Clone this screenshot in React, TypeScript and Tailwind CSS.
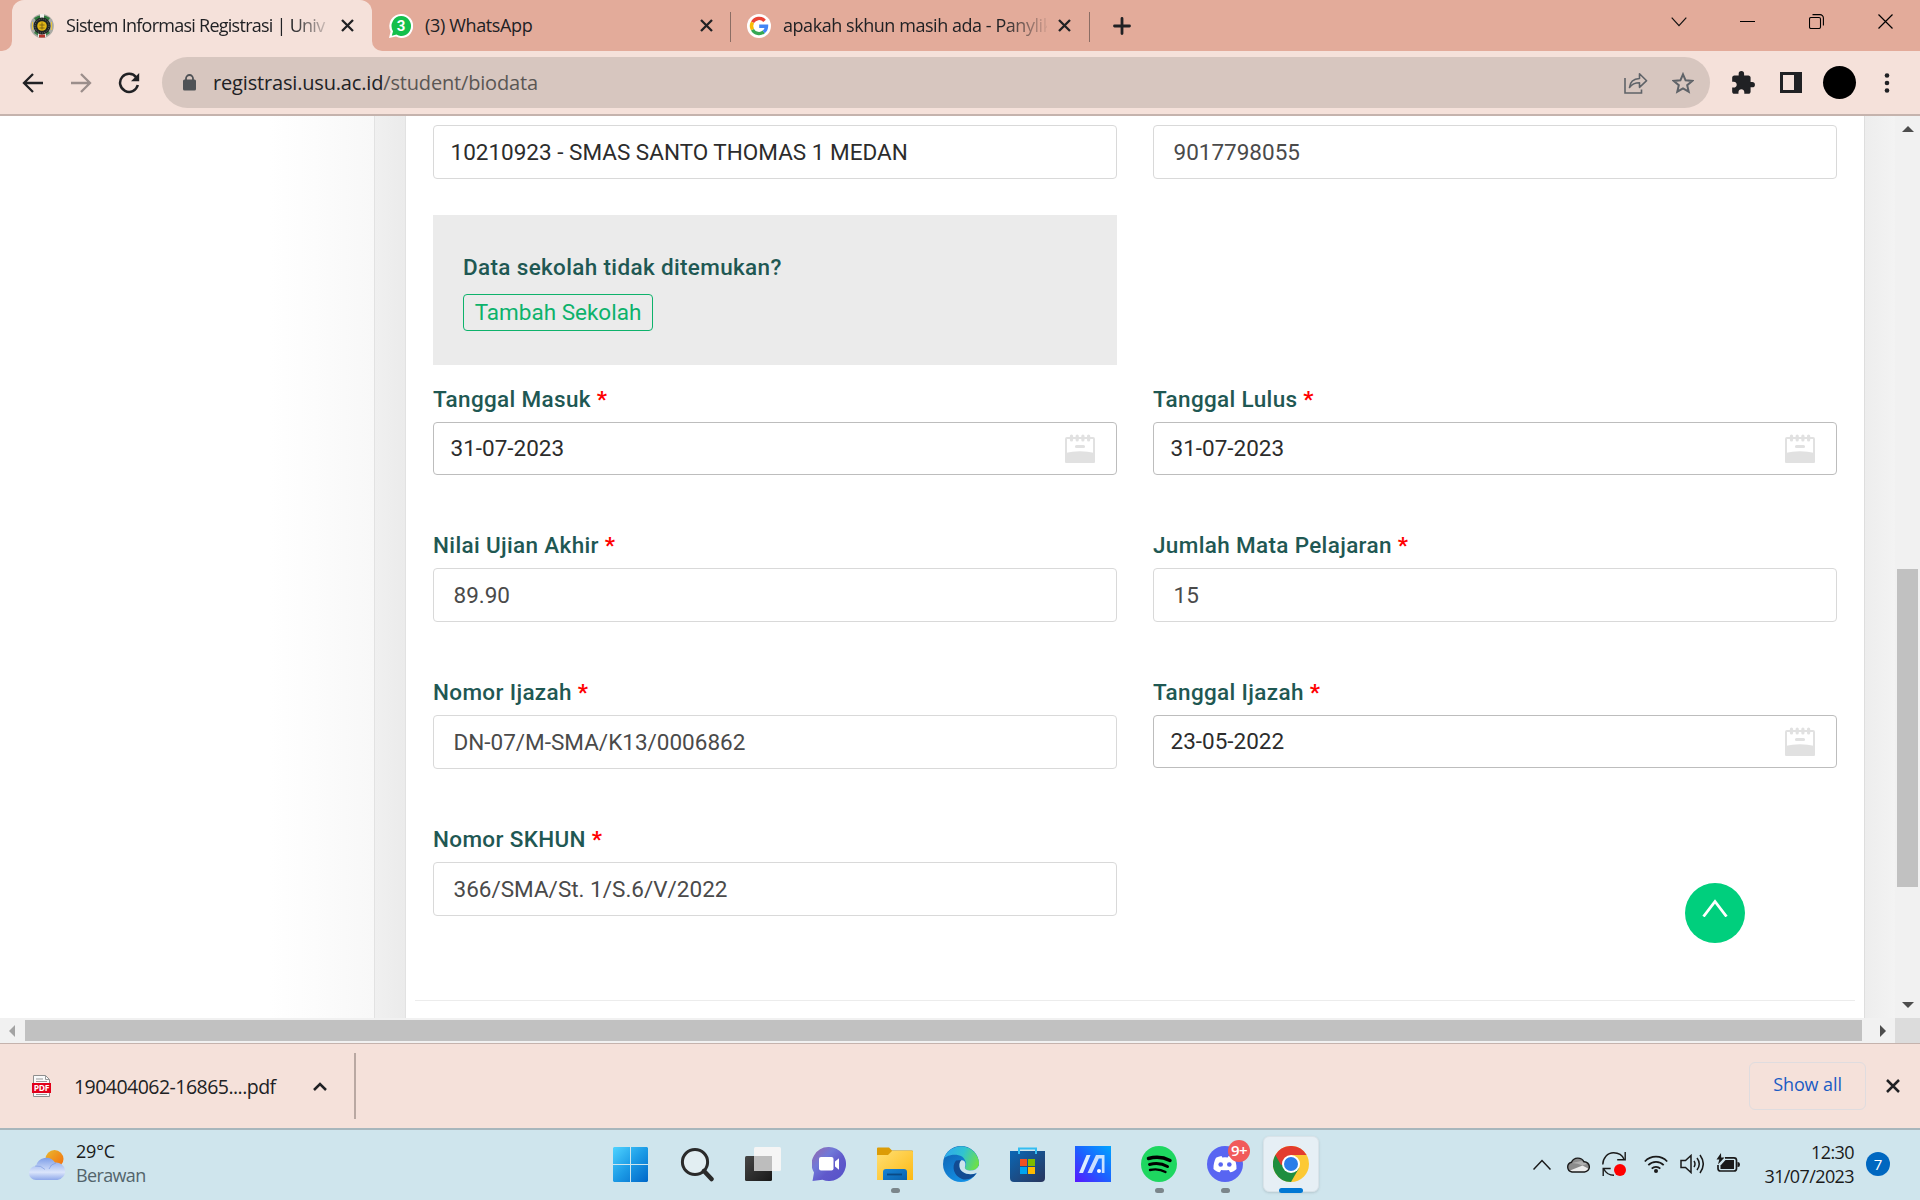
import React from "react";

const ui = "font-['Open_Sans','Noto_Sans',sans-serif]";

function TabClose({ className = "" }: { className?: string }) {
  return (
    <svg className={`shrink-0 ${className}`} width="13" height="13" viewBox="0 0 13 13" stroke="#202124" strokeWidth="2.3">
      <path d="M1 1l11 11M12 1L1 12" />
    </svg>
  );
}

function UsuCrest() {
  return (
    <svg className="shrink-0" width="24" height="24" viewBox="0 0 24 24">
      <ellipse cx="12" cy="12" rx="11.800" ry="12" fill="#a9aaa4" />
      <path d="M4 4Q12-1.500 20 4l-2 3H6z" fill="#2f7a3d" />
      <path d="M4 19q8 7 16 0l-2-3H6z" fill="#3c7f49" />
      <path d="M8 18h8v5H8z" fill="#e9e9e4" />
      <path d="M9 20.500h6v3H9z" fill="#b5352c" />
      <path d="M10 0h4v4h-4z" fill="#f1f1ec" />
      <circle cx="12" cy="12" r="8.500" fill="#1d2322" />
      <circle cx="12" cy="12" r="7" fill="none" stroke="#7d7f78" strokeWidth=".8" strokeDasharray="1 1" />
      <circle cx="12" cy="12" r="4.800" fill="#e0b516" />
      <path d="M12 8.500v7M9.500 11h5M9.500 14h5" stroke="#7a6212" strokeWidth=".9" />
      <path d="M2.500 8v8M21.500 8v8" stroke="#e7c53c" strokeWidth="1" />
    </svg>
  );
}

function WhatsAppIcon() {
  return (
    <span className="relative block h-6 w-6">
      <svg width="24" height="24" viewBox="0 0 24 24">
        <path d="M12.300 0A11.700 12 0 1 1 7 22.600L0 24l1.600-6.500A11.700 12 0 0 1 12.300 0z" fill="#fff" />
        <path d="M12.400 2A9.600 10 0 1 1 7.500 20.600L2.800 21.800 4 17.200A9.600 10 0 0 1 12.400 2z" fill="#12bf4b" />
      </svg>
      <span className="absolute inset-0 text-center font-['Roboto',sans-serif] text-[15px] leading-[25px] font-bold text-white">3</span>
    </span>
  );
}

function GoogleIcon() {
  return (
    <svg className="shrink-0" width="24" height="24" viewBox="0 0 24 24">
      <circle cx="12" cy="12" r="12" fill="#fff" />
      <g fill="none" strokeWidth="3.400">
        <path d="M17.600 6.800A7.500 7.500 0 0 0 5.500 8.300" stroke="#ea4335" />
        <path d="M5.500 8.300a7.500 7.500 0 0 0 0 7.400" stroke="#fbbc05" />
        <path d="M5.500 15.700a7.500 7.500 0 0 0 11.300 2.200" stroke="#34a853" />
        <path d="M16.700 18a7.500 7.500 0 0 0 2.800-5.700H12.200" stroke="#4285f4" />
      </g>
    </svg>
  );
}

function TabStrip() {
  return (
    <header className={`flex h-[51px] bg-[#e3ab9a] text-[18px] text-[#202124] ${ui}`}>
      <div className="flex h-full w-3 items-end bg-[#f5e1da]">
        <div className="h-full w-full rounded-br-[10px] bg-[#e3ab9a]" />
      </div>
      <div className="flex h-full w-[360px] items-center rounded-t-[12px] bg-[#f5e1da] pl-[18px]">
        <UsuCrest />
        <span className="ml-3 block w-[264px] whitespace-nowrap tracking-[-0.740px] [mask-image:linear-gradient(to_right,black_225px,transparent_268px)]">
          Sistem Informasi Registrasi | Univ
        </span>
        <TabClose className="ml-[11px]" />
      </div>
      <div className="flex h-full w-[12px] bg-[#f5e1da]">
        <div className="h-full w-full rounded-bl-[10px] bg-[#e3ab9a]" />
      </div>
      <div className="flex h-full w-[346px] items-center pl-[5px]">
        <WhatsAppIcon />
        <span className="ml-3 w-[275px] tracking-[-0.350px]">(3) WhatsApp</span>
        <TabClose />
      </div>
      <div className="mt-3 h-[30px] w-px bg-[#8b6d64]" />
      <div className="flex h-full w-[358px] items-center pl-4">
        <GoogleIcon />
        <span className="ml-3 block w-[264px] whitespace-nowrap tracking-[-0.450px] [mask-image:linear-gradient(to_right,black_220px,transparent_268px)]">
          apakah skhun masih ada - Panylik
        </span>
        <TabClose className="ml-[11px]" />
      </div>
      <div className="mt-3 h-[30px] w-px bg-[#8b6d64]" />
      <svg className="mt-[17px] ml-[23px]" width="18" height="18" viewBox="0 0 18 18" stroke="#202124" strokeWidth="2.800" strokeLinecap="round">
        <path d="M9 1.500v15M1.500 9h15" />
      </svg>
      <div className="ml-auto flex h-[43px] items-center pr-[27px]">
        <svg width="16" height="10" viewBox="0 0 16 10" fill="none" stroke="#111" strokeWidth="1.200"><path d="M.7 .7l7.300 8 7.300-8" /></svg>
        <div className="ml-[53px] h-px w-[15px] bg-black" />
        <svg className="ml-[54px]" width="15" height="15" viewBox="0 0 15 15" fill="none" stroke="#000" strokeWidth="1.100">
          <rect x=".5" y="3.500" width="11" height="11" rx="1.500" />
          <path d="M3.500 .6h7.500a3.400 3.400 0 0 1 3.400 3.400v7.500" />
        </svg>
        <svg className="ml-[54px]" width="15" height="15" viewBox="0 0 15 15" stroke="#000" strokeWidth="1.200"><path d="M.5 .5l14 14M14.500 .5l-14 14" /></svg>
      </div>
    </header>
  );
}

function Toolbar() {
  return (
    <div className="flex h-[65px] items-center border-b-2 border-[#c5b3ad] bg-[#f5e1da] pl-[22px]">
      <svg width="22" height="20" viewBox="0 0 22 20" fill="none" stroke="#202124" strokeWidth="2.300"><path d="M21 10H2.500M11 1L2 10l9 9" /></svg>
      <svg className="ml-[27px]" width="22" height="20" viewBox="0 0 22 20" fill="none" stroke="#9b8e8b" strokeWidth="2.300"><path d="M0 10h18.500M10 1l9 9-9 9" /></svg>
      <svg className="ml-[25px]" width="22" height="22" viewBox="0 0 22 22">
        <path d="M18.300 5.500A9 9 0 1 0 19.800 13" fill="none" stroke="#202124" strokeWidth="2.500" />
        <path d="M21.200 1v8.200H13z" fill="#202124" />
      </svg>
      <div className="ml-[22px] flex h-[51px] w-[1548px] items-center rounded-full bg-[#d7c6bf] pl-[21px]">
        <svg width="13" height="17" viewBox="0 0 13 17">
          <rect x="0" y="5.500" width="13" height="11" rx="1.500" fill="#4f5256" />
          <path d="M3 6.500V4.500a3.500 3.500 0 0 1 7 0v2" fill="none" stroke="#4f5256" strokeWidth="1.800" />
        </svg>
        <span className={`ml-[17px] text-[20px] leading-[51px] text-[#5a5654] tracking-[-0.170px] whitespace-nowrap ${ui}`}>
          <span className="text-[#202124]">registrasi.usu.ac.id</span>/student/biodata
        </span>
        <svg className="ml-auto" width="24" height="22" viewBox="0 0 24 22" fill="none" stroke="#5f6368" strokeWidth="1.600">
          <path d="M1 6v15h16.500v-3.500" />
          <path d="M5.500 15.500C6 9.500 10 6.800 15.500 6.500V1.800L22.600 8.700l-7.100 6.600v-4.500C11 10.800 8 12 5.500 15.500z" strokeLinejoin="round" />
        </svg>
        <svg className="ml-6 mr-4" width="22" height="22" viewBox="0 0 22 22" fill="none" stroke="#5f6368" strokeWidth="2">
          <path d="M11 2.300l2.600 6 6.600.600-5 4.300 1.500 6.500L11 16.300l-5.700 3.400 1.500-6.500-5-4.300 6.600-.6z" />
        </svg>
      </div>
      <svg className="ml-[20px]" width="26" height="26" viewBox="0 0 24 24" fill="#202124">
        <path d="M20.500 11H19V7c0-1.100-.9-2-2-2h-4V3.500a2.500 2.500 0 0 0-5 0V5H4c-1.100 0-1.990.9-1.990 2v3.800H3.500c1.490 0 2.700 1.210 2.700 2.700s-1.210 2.700-2.700 2.700H2V20c0 1.100.9 2 2 2h3.800v-1.500c0-1.490 1.210-2.700 2.700-2.700 1.490 0 2.700 1.210 2.700 2.700V22H17c1.100 0 2-.9 2-2v-4h1.500a2.500 2.500 0 0 0 0-5z" />
      </svg>
      <svg className="ml-6" width="22" height="21" viewBox="0 0 22 21"><path fillRule="evenodd" d="M0 0h22v21H0zM3 3h11v15H3z" fill="#202124" /></svg>
      <div className="ml-[21px] h-[33px] w-[33px] rounded-full bg-black" />
      <svg className="ml-[28px]" width="6" height="20" viewBox="0 0 6 20" fill="#202124"><circle cx="3" cy="2.500" r="2.300" /><circle cx="3" cy="10" r="2.300" /><circle cx="3" cy="17.500" r="2.300" /></svg>
    </div>
  );
}

function CalendarIcon() {
  return (
    <svg width="30" height="29" viewBox="0 0 30 29">
      <rect x="1" y="4" width="28" height="24" rx="1" fill="none" stroke="#e1e1e1" strokeWidth="2" />
      <path d="M0 19q15-3.500 30 0v8.500a1.500 1.500 0 0 1-1.500 1.500h-27A1.500 1.500 0 0 1 0 27.500z" fill="#e1e1e1" />
      <path d="M6.500 2v4M12.200 2v4M17.900 2v4M23.600 2v4M11.500 12.500h7" stroke="#e1e1e1" strokeWidth="3.200" strokeLinecap="round" />
    </svg>
  );
}

type FieldProps = { label: string; value: string; date?: boolean };

function Field({ label, value, date }: FieldProps) {
  return (
    <div className="w-[684px]">
      <div className="h-[38px] text-[22.500px] leading-[30px] font-medium tracking-[0.340px] text-[#1f5853]">
        {label} <span className="font-bold text-[#ff0000]">*</span>
      </div>
      {date ? (
        <div className="flex h-[53px] items-center justify-between rounded-[4px] border border-[#bdbdbd] pr-[21px] pl-[16.500px] text-[22.500px] text-[#2c2c2c]">
          <span>{value}</span>
          <CalendarIcon />
        </div>
      ) : (
        <div className="flex h-[54px] items-center rounded-[4px] border border-[#d9d9d9] pt-[2px] pl-[19.500px] text-[22.500px] text-[#4a4a4a]">{value}</div>
      )}
    </div>
  );
}

const rows: FieldProps[][] = [
  [
    { label: "Tanggal Masuk", value: "31-07-2023", date: true },
    { label: "Tanggal Lulus", value: "31-07-2023", date: true },
  ],
  [
    { label: "Nilai Ujian Akhir", value: "89.90" },
    { label: "Jumlah Mata Pelajaran", value: "15" },
  ],
  [
    { label: "Nomor Ijazah", value: "DN-07/M-SMA/K13/0006862" },
    { label: "Tanggal Ijazah", value: "23-05-2022", date: true },
  ],
  [{ label: "Nomor SKHUN", value: "366/SMA/St. 1/S.6/V/2022" }],
];

function Page() {
  return (
    <main className="flex h-[902px] font-['Roboto',sans-serif]">
      <div className="w-[374px] bg-[linear-gradient(to_right,#ffffff_270px,#f8f8f8_374px)]" />
      <div className="w-8 border-x border-[#e2e2e2] bg-[linear-gradient(to_right,#f0f0f0,#ebebeb)]" />
      <section className="relative h-full w-[1458px] bg-white pt-[9px] pl-[27px]">
        <div className="flex gap-9 text-[22.500px]">
          <div className="flex h-[54px] w-[684px] items-center rounded-[4px] border border-[#d9d9d9] pt-[2px] pl-[16.500px] text-[#2c2c2c]">10210923 - SMAS SANTO THOMAS 1 MEDAN</div>
          <div className="flex h-[54px] w-[684px] items-center rounded-[4px] border border-[#d9d9d9] pt-[2px] pl-[19.500px] text-[#4a4a4a]">9017798055</div>
        </div>
        <div className="mt-9 h-[150px] w-[684px] bg-[#ebebeb] pt-[37px] pl-[30px]">
          <p className="text-[22.500px] leading-[30px] font-medium tracking-[0.340px] text-[#1f5853]">Data sekolah tidak ditemukan?</p>
          <button className="mt-[12px] flex h-[37px] w-[190px] items-center justify-center rounded-[4px] border border-[#0db26b] pb-[2px] text-[22.500px] leading-[34px] text-[#0db26b]">Tambah Sekolah</button>
        </div>
        <div className="mt-[19px]">
          {rows.map((row, i) => (
            <div key={i} className={i === 0 ? "flex h-[146px] gap-9" : "flex h-[147px] gap-9"}>
              {row.map((f) => <Field key={f.label} {...f} />)}
            </div>
          ))}
        </div>
        <div className="absolute top-[884px] left-[9px] h-px w-[1440px] bg-[#ececec]" />
        <button className="absolute top-[767px] left-[1279px] flex h-[60px] w-[60px] justify-center rounded-full bg-[#00cf7d] pt-[16px]">
          <svg width="26" height="18" viewBox="0 0 26 18" fill="none" stroke="#fff" strokeWidth="2.800"><path d="M1.500 17.500L13 2.500l11.500 15" /></svg>
        </button>
      </section>
      <div className="w-[31px] border-l border-[#dedede] bg-[linear-gradient(to_right,#ededed,#f3f3f3)]" />
      <div className="flex w-[25px] flex-col items-center bg-[#f1f1f1] pt-[10px]">
        <svg width="12" height="6" viewBox="0 0 12 6"><path d="M0 6l6-6 6 6z" fill="#4d4d4d" /></svg>
        <div className="mt-[437px] h-[318px] w-[21px] bg-[#c1c1c1]" />
        <svg className="mt-[115px]" width="12" height="6" viewBox="0 0 12 6"><path d="M0 0h12L6 6z" fill="#4d4d4d" /></svg>
      </div>
    </main>
  );
}

function HScroll() {
  return (
    <div className="flex h-[25px] items-center bg-[#f1f1f1] pl-[9px]">
      <svg width="6" height="12" viewBox="0 0 6 12"><path d="M6 0v12L0 6z" fill="#a3a3a3" /></svg>
      <div className="ml-[10px] h-[21px] w-[1837px] bg-[#c1c1c1]" />
      <svg className="ml-[18px]" width="6" height="12" viewBox="0 0 6 12"><path d="M0 0v12l6-6z" fill="#4d4d4d" /></svg>
      <div className="ml-auto h-[25px] w-[25px] bg-[#dcdcdc]" />
    </div>
  );
}

function DownloadBar() {
  return (
    <div className={`flex h-[87px] items-center border-t border-b-2 border-t-[#c5b3ad] border-b-[#a7b6bc] bg-[#f5e1da] pl-8 ${ui}`}>
      <span className="relative block h-[22px] w-[19px]">
        <svg width="19" height="22" viewBox="0 0 19 22">
          <path d="M1.500 .5h12l4 4v17h-16z" fill="#fafafa" stroke="#8e8e8e" />
          <path d="M13.500 .5v4h4M4 4h7M4 6.500h11M4 19.500h11" stroke="#9b9b9b" fill="none" />
          <path d="M0 8h19v10H0z" fill="#e2001a" />
        </svg>
        <span className="absolute inset-x-0 top-[8px] text-center text-[8.500px] leading-[10px] font-bold tracking-[-0.200px] text-white">PDF</span>
      </span>
      <span className="ml-[23px] w-[239px] pt-[2px] text-[19.500px] tracking-[-0.530px] whitespace-nowrap text-[#202124]">190404062-16865....pdf</span>
      <svg width="14" height="9" viewBox="0 0 14 9" fill="none" stroke="#202124" strokeWidth="2.500"><path d="M1 8l6-6 6 6" /></svg>
      <div className="ml-[27px] h-[66px] w-[2px] bg-[#b9a8a2]" />
      <button className="ml-auto h-12 w-[117px] rounded-[6px] border border-[#dfdcdf] pb-[3px] text-[18px] font-medium tracking-[-0.100px] text-[#1a5bc4]">Show all</button>
      <svg className="mr-5 ml-5" width="14" height="14" viewBox="0 0 14 14" stroke="#202124" strokeWidth="2.500"><path d="M1 1l12 12M13 1L1 13" /></svg>
    </div>
  );
}

function AppSlot({ children, running }: { children: React.ReactNode; running?: boolean }) {
  return (
    <div className="relative flex h-14 w-[66px] items-center justify-center">
      {children}
      {running && <i className="absolute bottom-[-1px] h-[5px] w-[9px] rounded-full bg-[#7b868b]" />}
    </div>
  );
}

function TaskApps() {
  return (
    <div className="flex pt-[6px]">
      <div className="mr-px">
        <AppSlot>
          <svg width="35" height="35" viewBox="0 0 35 35">
            <defs><linearGradient id="win" gradientUnits="userSpaceOnUse" x1="0" y1="0" x2="35" y2="35"><stop stopColor="#4fd3ff" /><stop offset=".5" stopColor="#1c9be6" /><stop offset="1" stopColor="#0067c8" /></linearGradient></defs>
            <path d="M1 0h16v17H0V1zM18 0h16l1 1v16H18zM0 18h17v17H1l-1-1zM18 18h17v16l-1 1H18z" fill="url(#win)" />
          </svg>
        </AppSlot>
      </div>
      <AppSlot>
        <svg width="34" height="35" viewBox="0 0 34 35" fill="none"><circle cx="15" cy="15" r="12.600" fill="#e2eef2" stroke="#2a2a2a" strokeWidth="3" /><path d="M24 24l7.500 8" stroke="#2a2a2a" strokeWidth="4.500" strokeLinecap="round" /></svg>
      </AppSlot>
      <AppSlot>
        <svg width="36" height="34" viewBox="0 0 36 34">
          <defs><linearGradient id="tv" x1="0" y1="0" x2="1" y2="1"><stop stopColor="#464646" /><stop offset="1" stopColor="#181818" /></linearGradient></defs>
          <rect y="9" width="27" height="25" rx="1.500" fill="url(#tv)" /><rect x="9" y="0" width="27" height="24" rx="1.500" fill="#f5f5f5" /><path d="M9 9h18v15H9z" fill="#bdbdbd" />
        </svg>
      </AppSlot>
      <AppSlot>
        <svg width="34" height="34" viewBox="0 0 34 34">
          <defs><linearGradient id="chat" x1="0" y1="0" x2="1" y2="1"><stop stopColor="#9a65a8" /><stop offset=".35" stopColor="#7079d8" /><stop offset=".6" stopColor="#6059cb" /><stop offset="1" stopColor="#5552c9" /></linearGradient></defs>
          <path d="M17 0a17 17 0 1 1-6.500 32.700L.5 34l1.500-8.500A17 17 0 0 1 17 0z" fill="url(#chat)" />
          <rect x="7" y="10" width="14.500" height="13.500" rx="2" fill="#fff" /><path d="M23 14.500l4-3.200v11.400l-4-3.200z" fill="#fff" />
        </svg>
      </AppSlot>
      <AppSlot running>
        <svg width="36" height="34" viewBox="0 0 36 34">
          <defs><linearGradient id="fold" x1="0" y1="0" x2="1" y2="1"><stop stopColor="#ffdf73" /><stop offset="1" stopColor="#fdb913" /></linearGradient><linearGradient id="foldb" x1="0" y1="0" x2="1" y2="1"><stop stopColor="#1684d6" /><stop offset="1" stopColor="#0b61ac" /></linearGradient></defs>
          <path d="M0 1.500Q0 .5 1 .5h11l3 3h20q1 0 1 1V10H0z" fill="#dc9c06" />
          <path d="M0 8h11l4-4h20q1 0 1 1v28H0z" fill="url(#fold)" />
          <path d="M6 33v-8q0-3 3-3h18q3 0 3 3v8z" fill="url(#foldb)" /><path d="M10 27.500h15" stroke="#0a4a85" strokeWidth="1.800" />
        </svg>
      </AppSlot>
      <AppSlot>
        <svg width="36" height="36" viewBox="0 0 36 36">
          <defs>
            <linearGradient id="ea" x1="0" y1=".3" x2="1" y2=".6"><stop stopColor="#2fa8ee" /><stop offset=".5" stopColor="#31c3d0" /><stop offset="1" stopColor="#6ee047" /></linearGradient>
            <linearGradient id="eb" x1="0" y1="0" x2=".6" y2="1"><stop stopColor="#0f5fae" /><stop offset="1" stopColor="#1491e6" /></linearGradient>
          </defs>
          <circle cx="18" cy="18" r="18" fill="url(#eb)" />
          <path d="M1 12.500A18 18 0 0 1 36 17c0 5-4 7.500-8.500 7.500-3.500 0-6-1.300-5.500-3 1.500-2.300 1.600-7.500-3-11C13 7 4 9 1 12.500z" fill="url(#ea)" />
          <path d="M13 14.500c-5 6-2 15.500 6 18.500 6 1.800 12-1.500 14.500-6-7 3-16 0-17-6.500-.2-3 .5-5 2-6.500z" fill="#124b92" />
          <path d="M18 14.500c3-1 5.500 2 4 6.500-.8 2 2 3.500 5.500 3.500 4 0 7-2 8.500-5v6.500l-2.500 1C26 30 17 27 16.500 20.500c-.2-3 .2-4.500 1.500-6z" fill="#cde4ec" />
        </svg>
      </AppSlot>
      <AppSlot>
        <svg width="35" height="35" viewBox="0 0 35 35">
          <defs><linearGradient id="store" x1="0" y1="0" x2="1" y2="1"><stop stopColor="#0b67b5" /><stop offset="1" stopColor="#29355c" /></linearGradient></defs>
          <path d="M0 4h35v27q0 4-4 4H4q-4 0-4-4z" fill="url(#store)" /><path d="M9 7V1.500h17V7" fill="none" stroke="#33bdf2" strokeWidth="2" />
          <path d="M10 12h7v7h-7z" fill="#f25022" /><path d="M18 12h7v7h-7z" fill="#7fba00" /><path d="M10 20h7v7h-7z" fill="#00a4ef" /><path d="M18 20h7v7h-7z" fill="#ffb900" />
        </svg>
      </AppSlot>
      <AppSlot>
        <svg width="36" height="36" viewBox="0 0 36 36">
          <defs><linearGradient id="myasus" x1="0" y1="1" x2="1" y2="0"><stop stopColor="#5a16ff" /><stop offset=".5" stopColor="#1c62ff" /><stop offset="1" stopColor="#00a5ff" /></linearGradient></defs>
          <path d="M0 0h36v36H0z" fill="url(#myasus)" />
          <path d="M4 27L11.500 9h4L8 27z" fill="#dcecff" />
          <path d="M12.500 27L21 9h8.500v18h-2.700V12.500h-3L17 27z" fill="#dcecff" opacity=".9" />
          <circle cx="24" cy="25" r="2" fill="#fff" />
        </svg>
      </AppSlot>
      <AppSlot running>
        <svg width="36" height="36" viewBox="0 0 36 36"><circle cx="18" cy="18" r="18" fill="#1ed760" /><g fill="none" stroke="#000" strokeLinecap="round"><path d="M7.500 12.500q11.500-3.200 21.500 2" strokeWidth="3.500" /><path d="M8.500 18.500q10-2.500 18 2" strokeWidth="3" /><path d="M9 24q8.500-2 15.500 2" strokeWidth="2.400" /></g></svg>
      </AppSlot>
      <AppSlot running>
        <svg width="36" height="36" viewBox="0 0 36 36"><circle cx="18" cy="18" r="18" fill="#5865f2" /><path d="M14.500 10c-3 .4-5 1.400-5.500 1.800C7.500 14.500 6.300 18.500 6.500 23c1.800 2 4 3 6.300 3.200l1.400-2.300q3.800.8 7.600 0l1.400 2.300c2.300-.2 4.500-1.200 6.300-3.200.2-4.500-1-8.500-2.500-11.200-.5-.4-2.500-1.400-5.500-1.800l-.8 1.500q-2.700-.4-5.400 0z" fill="#fff" /><circle cx="13.700" cy="18.500" r="2.300" fill="#5865f2" /><circle cx="22.300" cy="18.500" r="2.300" fill="#5865f2" /></svg>
        <span className="absolute top-[4px] left-[36px] h-[22px] w-[22px] rounded-full bg-[#f15a5a] text-center font-['Open_Sans',sans-serif] text-[15px] leading-[21px] font-semibold tracking-[-0.500px] text-white">9+</span>
      </AppSlot>
      <div className="relative ml-[5px] flex h-14 w-14 items-center justify-center rounded-[6px] border border-[#d9e3e9] bg-[#e6eff5] shadow-sm">
        <svg width="36" height="36" viewBox="0 0 36 36">
          <circle cx="18" cy="18" r="18" fill="#fcc934" />
          <path d="M2.400 9A18 18 0 0 1 33.600 9H18z" fill="#e33b2e" />
          <path d="M2.400 9A18 18 0 0 0 18 36l7.800-13.500-7.800-4.500z" fill="#1e8e3e" />
          <path d="M2.400 9l7.800 13.500L16 20l-2-8z" fill="#1e8e3e" />
          <path d="M2.400 9H18v3l-8 6.500-2 .5z" fill="#e33b2e" />
          <circle cx="18" cy="18" r="9" fill="#fff" /><circle cx="18" cy="18" r="7" fill="#2b7de9" />
        </svg>
        <i className="absolute bottom-[-2px] h-[5px] w-6 rounded-full bg-[#0078d4]" />
      </div>
    </div>
  );
}

function Tray() {
  return (
    <div className="ml-auto flex h-[68px] items-center">
      <svg width="18" height="11" viewBox="0 0 18 11" fill="none" stroke="#1a1a1a" strokeWidth="1.500"><path d="M.5 10.500L9 1.500l8.500 9" /></svg>
      <svg className="ml-[15px]" width="24" height="17" viewBox="0 0 24 17">
        <path d="M6 16a5 5 0 0 1-.5-9.800A7 7 0 0 1 18 5.800 5 5 0 0 1 18.500 16z" fill="#8b8b8b" />
        <path d="M6 16L4 14.500l12.500-5L23 13q-1 3-4.500 3z" fill="#ececec" /><path d="M6 7q6 0 10.500 2.500L21 8q-1.500-2-3-2.200L15 5z" fill="#b0b0b0" />
        <path d="M6 16a5 5 0 0 1-.5-9.800A7 7 0 0 1 18 5.800 5 5 0 0 1 18.500 16z" fill="none" stroke="#1a1a1a" strokeWidth="1.400" />
      </svg>
      <svg className="ml-3" width="24" height="24" viewBox="0 0 24 24" fill="none" stroke="#1a1a1a" strokeWidth="1.400">
        <path d="M.8 12.500C.8 6 5.500 .8 11.500 .8c4.800 0 9 2.700 10.700 6.700" />
        <path d="M23.200 0v7.700h-8" />
        <path d="M1.800 17c2 4 5.500 6.300 10.200 6.300" />
        <path d="M1.200 24v-7.500h7.500" />
        <circle cx="18" cy="18" r="6" fill="#f00" stroke="none" />
      </svg>
      <svg className="ml-[18px]" width="24" height="18" viewBox="0 0 24 18" fill="none" stroke="#1a1a1a" strokeWidth="1.700"><path d="M.8 6.500a15.500 15.500 0 0 1 22.400 0M4.300 10.200a10.700 10.700 0 0 1 15.400 0M7.700 13.600a6 6 0 0 1 8.600 0" /><circle cx="12" cy="16" r="2" fill="#1a1a1a" stroke="none" /></svg>
      <svg className="ml-3" width="24" height="20" viewBox="0 0 24 20" fill="none" stroke="#1a1a1a" strokeWidth="1.500"><path d="M1 6.500h4.500L11 1.500v17l-5.500-5H1zM14 7q2 3 0 6M17 4q4.500 6 0 12M20 1q6.500 9 0 18" /></svg>
      <svg className="mb-[3px] ml-3" width="24" height="20" viewBox="0 0 24 20">
        <path d="M9 4.800h9q2.500 0 2.500 2.500v8.200q0 2.500-2.500 2.500H4.500Q2 18 2 15.500V12" fill="none" stroke="#1a1a1a" strokeWidth="1.700" />
        <path d="M9.500 7h8.500v9H4.500v-3.500z" fill="#1a1a1a" />
        <path d="M21.500 9h.5q2 0 2 2.500t-2 2.500h-.5z" fill="#1a1a1a" />
        <path d="M5 0L.5 6.500h2.800L2 11.500 8.500 4.500H5.200z" fill="#1a1a1a" />
      </svg>
      <div className="ml-[14px] w-[100px] pb-[1px] text-right text-[18px] leading-6 tracking-[-0.600px] text-[#1a1a1a]">
        <div>12:30</div>
        <div>31/07/2023</div>
      </div>
      <span className="mr-[30px] ml-3 h-6 w-6 rounded-full bg-[#0067c0] text-center text-[15px] leading-6 text-white">7</span>
    </div>
  );
}

function Taskbar() {
  return (
    <footer className={`flex h-[70px] bg-[#cfe5ed] ${ui}`}>
      <div className="flex w-[597px] pl-[29px]">
        <svg className="mt-5" width="36" height="31" viewBox="0 0 36 31">
          <defs><linearGradient id="sun" x1="0" y1="0" x2="1" y2="1"><stop stopColor="#e9b92f" /><stop offset="1" stopColor="#f56a0a" /></linearGradient><linearGradient id="cl" x1="0" y1="0" x2="0" y2="1"><stop stopColor="#7e9ee8" /><stop offset=".65" stopColor="#dbe5fb" /><stop offset="1" stopColor="#8ea8ea" /></linearGradient></defs>
          <circle cx="25.500" cy="9" r="9" fill="url(#sun)" />
          <path d="M7 30a7 7 0 0 1 0-14 10.500 10.500 0 0 1 19-3.500A8.800 8.800 0 0 1 28.500 30z" fill="url(#cl)" />
          <path d="M6 16q6-1 10 3.500M20 19q1.500-5 7-6" stroke="#7593de" strokeWidth="1" fill="none" opacity=".6" />
        </svg>
        <div className="ml-[11px] pt-[9px] text-[18px] leading-6 tracking-[-0.200px] text-[#1a1a1a]">
          <div>29°C</div>
          <div className="tracking-[-0.650px] text-[#53646b]">Berawan</div>
        </div>
      </div>
      <TaskApps />
      <Tray />
    </footer>
  );
}

export default function App() {
  return (
    <div className="h-[1200px] w-[1920px] overflow-hidden bg-white">
      <TabStrip />
      <Toolbar />
      <Page />
      <HScroll />
      <DownloadBar />
      <Taskbar />
    </div>
  );
}
